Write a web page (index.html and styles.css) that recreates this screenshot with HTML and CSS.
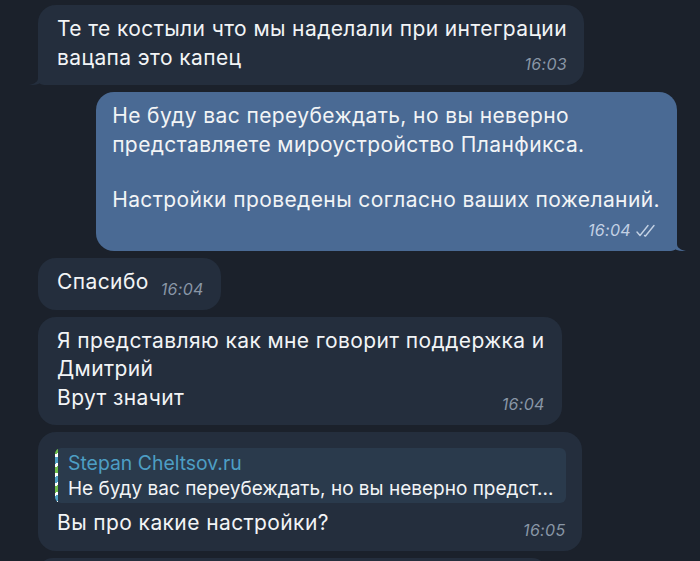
FILE: index.html
```html
<!DOCTYPE html>
<html lang="ru">
<head>
<meta charset="UTF-8">
<meta name="viewport" content="width=device-width, initial-scale=1.0">
<title>Чат</title>
<link rel="stylesheet" href="styles.css">
</head>
<body>

<div class="chat">

  <div class="msg in tail">
    <div class="bubble">
      <div class="line">Те те костыли что мы наделали при интеграции</div>
      <div class="line last">
        <span>вацапа это капец</span>
        <span class="time">16:03</span>
      </div>
      <svg class="tail-in" width="16" height="18" viewBox="0 0 16 18"><path d="M10 0 L10 11 C10 14.5 7 16.8 1 18 C7 18.3 11.5 17 14.5 15 L16 15 L16 0 Z"/></svg>
    </div>
  </div>

  <div class="msg out tail">
    <div class="bubble">
      <div class="line">Не буду вас переубеждать, но вы неверно</div>
      <div class="line">представляете мироустройство Планфикса.</div>
      <div class="line gap"></div>
      <div class="line">Настройки проведены согласно ваших пожеланий.</div>
      <div class="meta">
        <span class="time">16:04</span>
        <svg class="checks" width="21" height="13" viewBox="0 0 21 13"><path d="M1 8 L4 11.5 L12 1.5 M8.5 11.5 L9.5 12 L18 1.5" fill="none" stroke-width="1.4" stroke-linecap="round" stroke-linejoin="round"/></svg>
      </div>
      <svg class="tail-out" width="16" height="18" viewBox="0 0 16 18"><path d="M6 0 L6 11 C6 14.5 9 16.8 15 18 C9 18.3 4.5 17 1.5 15 L0 15 L0 0 Z"/></svg>
    </div>
  </div>

  <div class="msg in">
    <div class="bubble">
      <div class="line last">
        <span>Спасибо</span>
        <span class="time">16:04</span>
      </div>
    </div>
  </div>

  <div class="msg in">
    <div class="bubble">
      <div class="line">Я представляю как мне говорит поддержка и</div>
      <div class="line">Дмитрий</div>
      <div class="line last">
        <span>Врут значит</span>
        <span class="time">16:04</span>
      </div>
    </div>
  </div>

  <div class="msg in">
    <div class="bubble">
      <div class="reply">
        <div class="reply-bar"></div>
        <div class="reply-body">
          <div class="reply-name">Stepan Cheltsov.ru</div>
          <div class="reply-text">Не буду вас переубеждать, но вы неверно предст...</div>
        </div>
      </div>
      <div class="line last">
        <span>Вы про какие настройки?</span>
        <span class="time">16:05</span>
      </div>
    </div>
  </div>

  <div class="msg in">
    <div class="bubble stub"></div>
  </div>

</div>

</body>
</html>
```

FILE: styles.css
```css
body {
  margin: 0;
  background-color: #1b212b;
  font-family: Inter, "Noto Sans", sans-serif;
  color: #f2f4f6;
  overflow: hidden;
}
.chat {
  display: flex;
  flex-direction: column;
  gap: 7px;
  padding: 5px 14px 0 38px;
}
.msg {
  display: flex;
}
.msg.out {
  justify-content: flex-end;
  margin: 0 9px 0 58px;
}
.bubble {
  position: relative;
  background-color: #242e3d;
  border-radius: 18px;
  padding: 10px 17px 13px 19px;
  font-size: 21px;
  letter-spacing: 0.4px;
  line-height: 28.5px;
  white-space: nowrap;
}
.msg.tail.in .bubble {
  border-bottom-left-radius: 6px;
}
.msg.out .bubble {
  background-color: #4a6a94;
  padding: 10px 17px 11px 16px;
}
.msg.tail.out .bubble {
  border-bottom-right-radius: 6px;
}
.line.gap {
  height: 26.5px;
}
.line.last {
  display: flex;
  justify-content: space-between;
  align-items: flex-end;
  gap: 12px;
}
.time {
  font-size: 16px;
  line-height: 18px;
  font-style: italic;
  letter-spacing: 0.3px;
  color: #8996a6;
  margin-bottom: -1px;
}
.meta {
  display: flex;
  justify-content: flex-end;
  align-items: center;
  gap: 5px;
  margin: 6px 3px 0 0;
  height: 20px;
}
.meta .time {
  color: #c3d1e4;
  margin-bottom: 0;
}
.checks {
  stroke: #c3d1e4;
}
.tail-in {
  position: absolute;
  left: -10px;
  bottom: 0;
  fill: #242e3d;
}
.tail-out {
  position: absolute;
  right: -10px;
  bottom: 0;
  fill: #4a6a94;
}
.reply {
  display: flex;
  background-color: #2a3a4c;
  border-radius: 6px;
  margin: 6px -1px 6px -2px;
  overflow: hidden;
  letter-spacing: 0;
}
.reply-bar {
  width: 3px;
  background: repeating-linear-gradient(160deg, #6fbf4a 0 6px, #ffffff 6px 9px, #4f9fc4 9px 15px, #ffffff 15px 18px);
}
.reply-body {
  padding: 2px 13px 1px 10px;
  line-height: 26px;
}
.reply-name {
  color: #4d9ec4;
  font-size: 19.4px;
}
.reply-text {
  font-size: 19px;
}
.bubble.stub {
  width: 509px;
  height: 30px;
  padding: 0;
}
```
